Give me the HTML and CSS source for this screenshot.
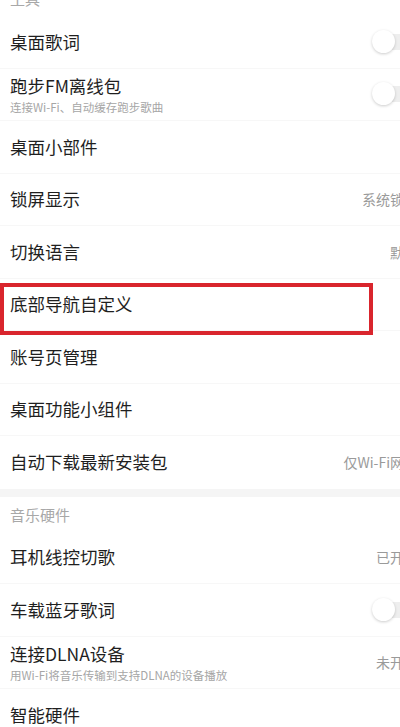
FILE: index.html
```html
<!DOCTYPE html>
<html lang="zh-CN">
<head>
<meta charset="utf-8">
<link rel="stylesheet" href="styles.css">
</head>
<body>
<div class="page">
  <section class="group">
    <div class="group-title">工具</div>
    <div class="row"><div class="label"><div class="title">桌面歌词</div></div><span class="toggle"><span class="knob"></span></span></div>
    <div class="row"><div class="label"><div class="title">跑步FM离线包</div><div class="sub">连接Wi-Fi、自动缓存跑步歌曲</div></div><span class="toggle"><span class="knob"></span></span></div>
    <div class="row"><div class="label"><div class="title">桌面小部件</div></div></div>
    <div class="row"><div class="label"><div class="title">锁屏显示</div></div><span class="value">系统锁屏</span></div>
    <div class="row"><div class="label"><div class="title">切换语言</div></div><span class="value">默认</span></div>
    <div class="row highlight"><div class="label"><div class="title">底部导航自定义</div></div></div>
    <div class="row"><div class="label"><div class="title">账号页管理</div></div></div>
    <div class="row"><div class="label"><div class="title">桌面功能小组件</div></div></div>
    <div class="row last"><div class="label"><div class="title">自动下载最新安装包</div></div><span class="value">仅Wi-Fi网络</span></div>
  </section>
  <div class="band"></div>
  <section class="group">
    <div class="group-title">音乐硬件</div>
    <div class="row"><div class="label"><div class="title">耳机线控切歌</div></div><span class="value">已开启</span></div>
    <div class="row"><div class="label"><div class="title">车载蓝牙歌词</div></div><span class="toggle"><span class="knob"></span></span></div>
    <div class="row"><div class="label"><div class="title">连接DLNA设备</div><div class="sub">用Wi-Fi将音乐传输到支持DLNA的设备播放</div></div><span class="value">未开启</span></div>
    <div class="row last"><div class="label"><div class="title">智能硬件</div></div></div>
  </section>
</div>
</body>
</html>
```

FILE: styles.css
```css
html, body {
  margin: 0;
  padding: 0;
  overflow: hidden;
  background: #ffffff;
}
body {
  width: 400px;
  height: 727px;
  font-family: "Noto Sans CJK SC", "Noto Sans", sans-serif;
}
.page {
  width: 430px;
  margin-top: -19px;
}
.group {
  display: flex;
  flex-direction: column;
  background: #ffffff;
}
.group-title {
  height: 35px;
  display: flex;
  align-items: center;
  padding-left: 10px;
  font-size: 15px;
  color: #a8a8a8;
}
.row {
  position: relative;
  height: 52.5px;
  box-sizing: border-box;
  display: flex;
  align-items: center;
  justify-content: space-between;
  padding: 0 12px 0 10px;
  border-bottom: 1px solid #f7f7f7;
}
.row.last {
  border-bottom: none;
}
.label {
  display: flex;
  flex-direction: column;
}
.title {
  font-size: 17.5px;
  line-height: 24px;
  color: #1f1f1f;
}
.sub {
  font-size: 11.5px;
  line-height: 16px;
  color: #a6a6a6;
  margin-top: 1px;
}
.value {
  font-size: 14px;
  color: #9a9a9a;
  white-space: nowrap;
}
.toggle {
  position: relative;
  width: 46px;
  height: 16px;
  border-radius: 8px;
  background: #eeeeee;
  flex: none;
}
.knob {
  position: absolute;
  left: 0;
  top: -4px;
  width: 23px;
  height: 23px;
  border-radius: 50%;
  background: #ffffff;
  box-shadow: 0 1px 3px rgba(0, 0, 0, 0.2);
}
.band {
  height: 8px;
  background: #f5f5f5;
}
.highlight::after {
  content: "";
  position: absolute;
  left: 0;
  top: 4px;
  width: 373px;
  height: 52px;
  box-sizing: border-box;
  border: 4px solid #d9252d;
  pointer-events: none;
}
```
